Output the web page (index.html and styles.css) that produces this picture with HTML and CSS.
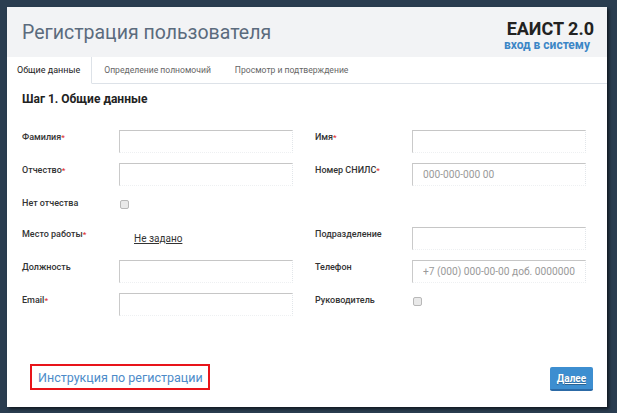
FILE: index.html
```html
<!DOCTYPE html>
<html lang="ru">

<head>
    <meta charset="UTF-8">
    <meta name="viewport" content="width=device-width, initial-scale=1.0">
    <title>Регистрация пользователя</title>
    <link rel="stylesheet" href="styles.css">
</head>

<body>
    <div class="window">
        <div class="header">
            <h1>Регистрация пользователя</h1>
            <div class="brand">
                <div class="brand-name">ЕАИСТ 2.0</div>
                <a href="#" class="login">вход в систему</a>
            </div>
        </div>

        <div class="tabs">
            <div class="tab active">Общие данные</div>
            <div class="tab">Определение полномочий</div>
            <div class="tab">Просмотр и подтверждение</div>
            <div class="tab-rest"></div>
        </div>

        <div class="content">
            <h2>Шаг 1. Общие данные</h2>

            <div class="form">
                <label>Фамилия<span class="req">*</span></label>
                <div class="field"><input type="text"></div>
                <label>Имя<span class="req">*</span></label>
                <div class="field"><input type="text"></div>

                <label>Отчество<span class="req">*</span></label>
                <div class="field"><input type="text"></div>
                <label>Номер СНИЛС<span class="req">*</span></label>
                <div class="field"><input type="text" placeholder="000-000-000 00"></div>

                <label class="short">Нет отчества</label>
                <div class="field short"><span class="check"></span></div>
                <label class="short"></label>
                <div class="field short"></div>

                <label>Место работы<span class="req">*</span></label>
                <div class="field"><a href="#" class="choose">Не задано</a></div>
                <label>Подразделение</label>
                <div class="field"><input type="text"></div>

                <label>Должность</label>
                <div class="field"><input type="text"></div>
                <label>Телефон</label>
                <div class="field"><input type="text" placeholder="+7 (000) 000-00-00 доб. 0000000"></div>

                <label>Email<span class="req">*</span></label>
                <div class="field"><input type="text"></div>
                <label>Руководитель</label>
                <div class="field"><span class="check"></span></div>
            </div>
        </div>

        <div class="footer">
            <div class="help-box"><a href="#">Инструкция по регистрации</a></div>
            <button class="next">Далее</button>
        </div>
    </div>
</body>

</html>
```

FILE: styles.css
```css
body {
    margin: 0;
    padding: 7px;
    background-color: #2a3d50;
    font-family: Roboto, "Liberation Sans", sans-serif;
    color: #333;
}

.window {
    width: 600px;
    height: 400px;
    background: #fff;
    display: flex;
    flex-direction: column;
    box-shadow: 2px 2px 3px rgba(0, 0, 0, 0.6);
}

.header {
    height: 50px;
    background: #f2f3f5;
    display: flex;
    justify-content: space-between;
    align-items: flex-start;
    padding: 0 13px 0 15px;
}

.header h1 {
    margin: 14px 0 0;
    font-size: 19.5px;
    font-weight: 400;
    color: #5b6b7d;
}

.brand {
    text-align: right;
    margin-top: 12px;
}

.brand-name {
    font-size: 18px;
    font-weight: 700;
    color: #222;
    line-height: 20px;
}

.login {
    display: block;
    font-size: 12px;
    font-weight: 700;
    color: #3b86c6;
    text-decoration: none;
    line-height: 13px;
    margin-right: 4px;
}

.tabs {
    display: flex;
    height: 27px;
}

.tab {
    padding: 0 12px;
    font-size: 8.6px;
    color: #666;
    line-height: 27px;
    border-bottom: 1px solid #dde2e8;
}

.tab.active {
    padding: 0 11px 0 10px;
    font-size: 9px;
    color: #222;
    border-bottom: 1px solid #fff;
    border-right: 1px solid #dde2e8;
}

.tab-rest {
    flex: 1;
    border-bottom: 1px solid #dde2e8;
}

.content {
    padding: 0 15px;
}

.content h2 {
    margin: 7px 0 0;
    font-size: 12px;
    font-weight: 700;
    color: #222;
    line-height: 16px;
}

.form {
    margin-top: 23px;
    display: grid;
    grid-template-columns: 97px 196px 97px 174px;
    row-gap: 10px;
}

.form label {
    font-size: 9px;
    font-weight: 500;
    color: #333;
    line-height: 12px;
    padding-top: 1px;
    height: 22px;
}

.form label.short,
.form .field.short {
    height: 20px;
}

.req {
    color: #e03030;
    font-size: 8px;
}

.field input {
    box-sizing: border-box;
    width: 174px;
    height: 23px;
    padding: 0 6px 0 10px;
    border: none;
    border-top: 1px solid #c6c6c6;
    border-left: 1px solid #cacaca;
    border-right: 1px dotted #e2e6ea;
    border-bottom: 1px dotted #eef0f2;
    font-family: Roboto, "Liberation Sans", sans-serif;
    font-size: 10.2px;
    color: #333;
    outline: none;
}

.field input::placeholder {
    color: #9a9a9a;
}

.check {
    display: block;
    box-sizing: border-box;
    width: 9px;
    height: 9px;
    margin: 4px 0 0 1px;
    border: 1px solid #b8b8b8;
    border-radius: 2px;
    background: #e9e9e9;
}

.choose {
    display: inline-block;
    margin: 3px 0 0 15px;
    font-size: 10px;
    color: #333;
    text-decoration: underline;
}

.footer {
    margin-top: auto;
    display: flex;
    justify-content: space-between;
    align-items: flex-end;
    padding: 0 14px 16px 23px;
}

.help-box {
    box-sizing: border-box;
    width: 180px;
    height: 26px;
    margin-bottom: 1px;
    border: 2px solid #e8141a;
    padding: 1px 0 0 6px;
}

.help-box a {
    font-size: 12.5px;
    color: #4d8bc9;
    text-decoration: none;
}

.next {
    width: 43px;
    height: 24px;
    padding: 0;
    border: none;
    border-bottom: 2px solid #2c6aa6;
    border-radius: 2px;
    background-color: #3d8ed0;
    color: white;
    font-family: Roboto, "Liberation Sans", sans-serif;
    font-size: 10px;
    font-weight: 700;
    text-decoration: underline;
    text-shadow: 0 1px 1px rgba(0, 0, 0, 0.3);
    cursor: pointer;
}
```
